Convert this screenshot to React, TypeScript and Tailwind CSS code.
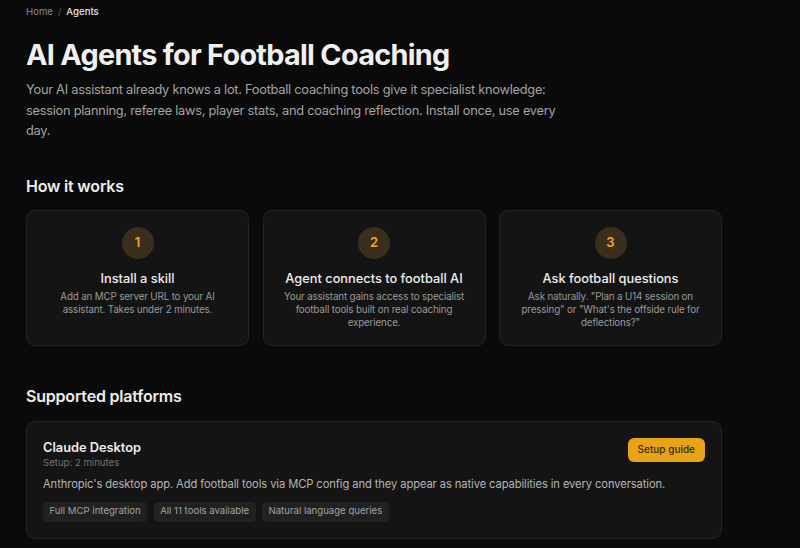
const steps = [
  {
    n: '1',
    title: 'Install a skill',
    body: 'Add an MCP server URL to your AI assistant. Takes under 2 minutes.',
  },
  {
    n: '2',
    title: 'Agent connects to football AI',
    body: 'Your assistant gains access to specialist football tools built on real coaching experience.',
  },
  {
    n: '3',
    title: 'Ask football questions',
    body: 'Ask naturally. "Plan a U14 session on pressing" or "What\'s the offside rule for deflections?"',
  },
];

const platforms = [
  {
    name: 'Claude Desktop',
    setup: 'Setup: 2 minutes',
    body: "Anthropic's desktop app. Add football tools via MCP config and they appear as native capabilities in every conversation.",
    tags: ['Full MCP integration', 'All 11 tools available', 'Natural language queries'],
  },
];

export default function App() {
  return (
    <div className="min-h-screen bg-[#0a0a0a] text-[#ededed] font-['Inter','Noto_Sans',sans-serif] antialiased">
      <div className="px-[26px] pt-[6px] pb-10 max-w-[748px]">
        <nav className="flex items-center gap-[5px] text-[9.6px] leading-[12.8px]">
          <span className="text-[#8a8a8a]">Home</span>
          <span className="text-[#5a5a5a]">/</span>
          <span className="text-[#e5e5e5] font-medium">Agents</span>
        </nav>

        <h1 className="mt-[20px] text-[28.8px] leading-[32px] font-bold tracking-[-0.7px] text-[#f0f0f0]">
          AI Agents for Football Coaching
        </h1>
        <p className="mt-[9px] max-w-[538px] text-[12.8px] leading-[20.8px] tracking-[-0.25px] text-[#a3a3a3]">
          Your AI assistant already knows a lot. Football coaching tools give it specialist knowledge: session
          planning, referee laws, player stats, and coaching reflection. Install once, use every day.
        </p>

        <h2 className="mt-[33px] text-[16px] leading-[22.4px] font-semibold tracking-[-0.2px] text-[#ededed]">
          How it works
        </h2>
        <div className="mt-[12px] grid grid-cols-3 gap-[13.5px]">
          {steps.map((s) => (
            <div
              key={s.n}
              className="rounded-[9px] border border-[#232323] bg-[#141414] p-4 flex flex-col items-center text-center"
            >
              <div className="w-8 h-8 rounded-full bg-[#3a2f1c] flex items-center justify-center text-[13px] font-semibold text-[#f5a623]">
                {s.n}
              </div>
              <h3 className="mt-[10px] text-[12.8px] leading-[19.2px] font-medium text-[#ededed]">{s.title}</h3>
              <p className="mt-[3.2px] text-[9.8px] leading-[12.8px] tracking-[-0.15px] text-[#9a9a9a]">{s.body}</p>
            </div>
          ))}
        </div>

        <h2 className="mt-[39px] text-[16px] leading-[22.4px] font-semibold tracking-[-0.2px] text-[#ededed]">
          Supported platforms
        </h2>
        <div className="mt-[12.8px] flex flex-col gap-3">
          {platforms.map((p) => (
            <div key={p.name} className="rounded-[9px] border border-[#232323] bg-[#141414] p-4">
              <div className="flex items-start justify-between">
                <div>
                  <h3 className="text-[12.8px] leading-[19.2px] font-semibold text-[#ededed]">{p.name}</h3>
                  <div className="text-[9.6px] leading-[12.8px] text-[#737373]">{p.setup}</div>
                </div>
                <button className="h-6 px-[10px] rounded-[6px] bg-[#e8a317] text-[10px] font-medium text-[#3a2806]">
                  Setup guide
                </button>
              </div>
              <p className="mt-[6px] text-[11.2px] leading-4 tracking-[-0.1px] text-[#b5b5b5]">{p.body}</p>
              <div className="mt-[10px] flex gap-[6.4px]">
                {p.tags.map((t) => (
                  <span
                    key={t}
                    className="rounded-[4px] bg-[#212121] px-[6.5px] py-[3.6px] text-[9.6px] leading-[12.8px] text-[#a3a3a3]"
                  >
                    {t}
                  </span>
                ))}
              </div>
            </div>
          ))}
        </div>
      </div>
    </div>
  );
}
